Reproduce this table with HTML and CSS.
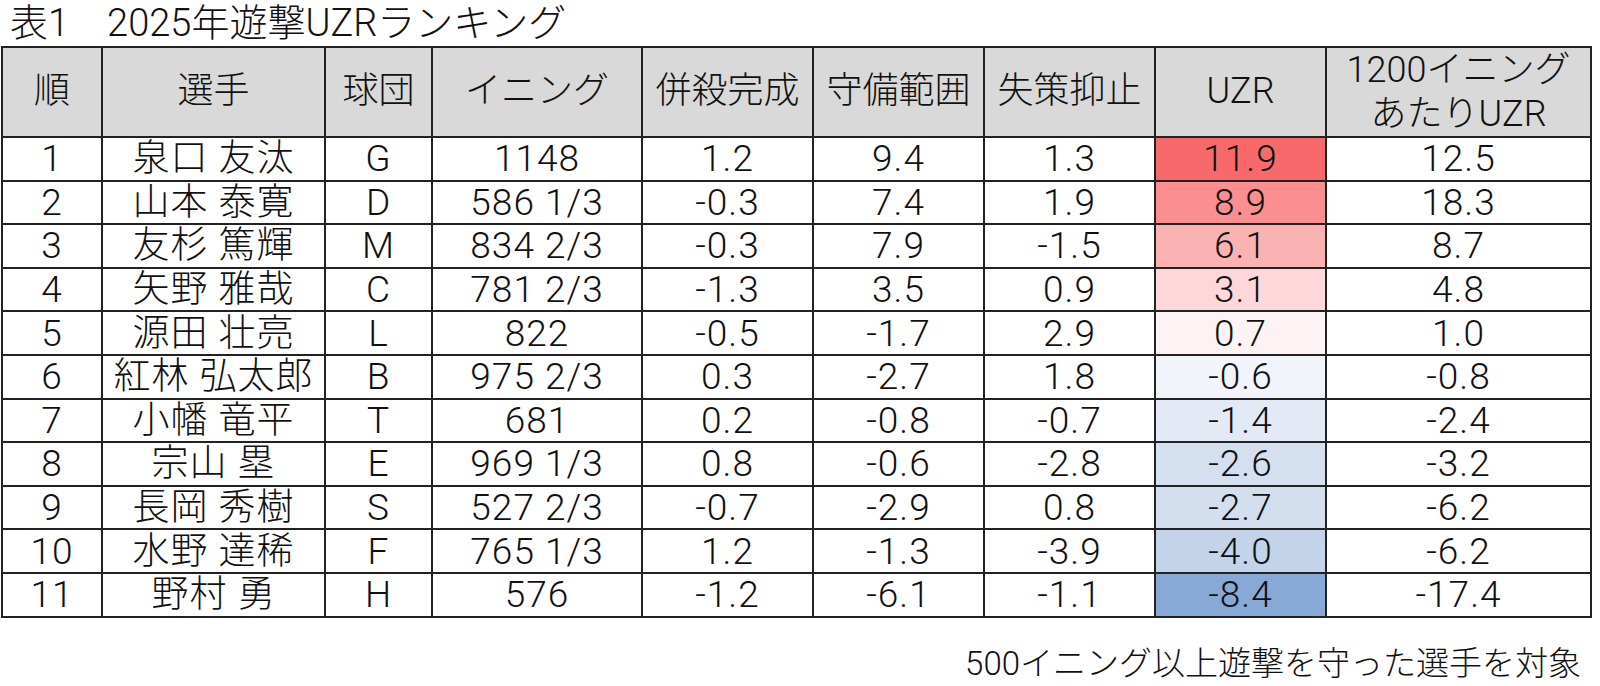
FILE: index.html
```html
<!DOCTYPE html>
<html lang="ja">
  <head>
    <meta charset="UTF-8" />
    <title>2025年遊撃UZRランキング</title>
    <link rel="stylesheet" href="styles.css">
  </head>
  <body>
    <div class="page">
      <h1 class="caption">表1　2025年遊撃UZRランキング</h1>
      <table class="rank-table">
        <colgroup>
          <col class="c-rank">
          <col class="c-name">
          <col class="c-team">
          <col class="c-inn">
          <col class="c-stat">
          <col class="c-stat">
          <col class="c-stat">
          <col class="c-stat">
          <col class="c-per">
        </colgroup>
        <thead>
          <tr>
            <th>順</th>
            <th>選手</th>
            <th>球団</th>
            <th>イニング</th>
            <th>併殺完成</th>
            <th>守備範囲</th>
            <th>失策抑止</th>
            <th>UZR</th>
            <th class="two-line">1200イニング<br>あたりUZR</th>
          </tr>
        </thead>
        <tbody>
          <tr><td>1</td><td>泉口 友汰</td><td>G</td><td>1148</td><td>1.2</td><td>9.4</td><td>1.3</td><td style="background:#f8696b">11.9</td><td>12.5</td></tr>
          <tr><td>2</td><td>山本 泰寛</td><td>D</td><td>586 1/3</td><td>-0.3</td><td>7.4</td><td>1.9</td><td style="background:#fa8e90">8.9</td><td>18.3</td></tr>
          <tr><td>3</td><td>友杉 篤輝</td><td>M</td><td>834 2/3</td><td>-0.3</td><td>7.9</td><td>-1.5</td><td style="background:#fbb2b3">6.1</td><td>8.7</td></tr>
          <tr><td>4</td><td>矢野 雅哉</td><td>C</td><td>781 2/3</td><td>-1.3</td><td>3.5</td><td>0.9</td><td style="background:#fdd7d9">3.1</td><td>4.8</td></tr>
          <tr><td>5</td><td>源田 壮亮</td><td>L</td><td>822</td><td>-0.5</td><td>-1.7</td><td>2.9</td><td style="background:#fef3f4">0.7</td><td>1.0</td></tr>
          <tr><td>6</td><td>紅林 弘太郎</td><td>B</td><td>975 2/3</td><td>0.3</td><td>-2.7</td><td>1.8</td><td style="background:#f1f5fb">-0.6</td><td>-0.8</td></tr>
          <tr><td>7</td><td>小幡 竜平</td><td>T</td><td>681</td><td>0.2</td><td>-0.8</td><td>-0.7</td><td style="background:#e3eaf5">-1.4</td><td>-2.4</td></tr>
          <tr><td>8</td><td>宗山 塁</td><td>E</td><td>969 1/3</td><td>0.8</td><td>-0.6</td><td>-2.8</td><td style="background:#d4e0f0">-2.6</td><td>-3.2</td></tr>
          <tr><td>9</td><td>長岡 秀樹</td><td>S</td><td>527 2/3</td><td>-0.7</td><td>-2.9</td><td>0.8</td><td style="background:#d3dfef">-2.7</td><td>-6.2</td></tr>
          <tr><td>10</td><td>水野 達稀</td><td>F</td><td>765 1/3</td><td>1.2</td><td>-1.3</td><td>-3.9</td><td style="background:#c3d3ea">-4.0</td><td>-6.2</td></tr>
          <tr><td>11</td><td>野村 勇</td><td>H</td><td>576</td><td>-1.2</td><td>-6.1</td><td>-1.1</td><td style="background:#88a8d6">-8.4</td><td>-17.4</td></tr>
        </tbody>
      </table>
      <p class="note">500イニング以上遊撃を守った選手を対象</p>
    </div>
  </body>
</html>
```

FILE: styles.css
```css
body {
  margin: 0;
  background-color: #fff;
  color: #111;
  font-family: Roboto, "Noto Sans CJK JP", sans-serif;
  font-weight: 300;
}
.page {
  width: 1600px;
  padding-left: 1px;
}
.caption {
  margin: 0;
  padding-left: 9px;
  height: 46px;
  font-size: 38px;
  font-weight: 300;
  line-height: 46px;
}
.rank-table {
  width: 1590px;
  table-layout: fixed;
  border-collapse: collapse;
  border: 2px solid #222;
}
.c-rank { width: 100px; }
.c-name { width: 223px; }
.c-team { width: 107px; }
.c-inn { width: 210px; }
.c-stat { width: 171px; }
.c-per { width: 265px; }
th,
td {
  padding: 0;
  border: 2px solid #222;
  text-align: center;
  font-weight: 300;
  white-space: nowrap;
}
th {
  height: 88px;
  background-color: #d9d9d9;
  font-size: 36px;
  line-height: 1.15;
}
th.two-line {
  line-height: 44px;
}
td {
  height: 41.6px;
  font-size: 37px;
  line-height: 1;
  letter-spacing: 1px;
}
.note {
  margin: 26px 0 0;
  width: 1590px;
  padding-right: 10px;
  box-sizing: border-box;
  text-align: right;
  font-size: 33px;
  line-height: 40px;
}
```
